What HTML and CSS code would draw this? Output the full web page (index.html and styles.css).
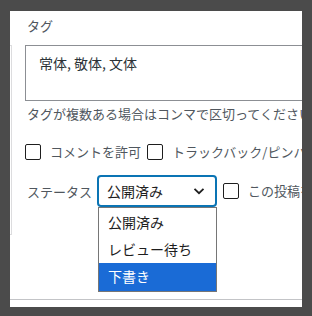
FILE: index.html
```html
<!DOCTYPE html>
<html lang="ja">
<head>
<meta charset="UTF-8">
<meta name="viewport" content="width=device-width, initial-scale=1.0">
<title>タグ</title>
<link rel="stylesheet" href="styles.css">
</head>
<body>
<div class="panel">
  <div class="behind"></div>
  <div class="label">タグ</div>
  <div class="tagbox">常体, 敬体, 文体</div>
  <div class="help">タグが複数ある場合はコンマで区切ってください</div>
  <div class="row checks">
    <span class="check"></span>
    <span class="check-label">コメントを許可</span>
    <span class="check"></span>
    <span class="check-label">トラックバック/ピンバック</span>
  </div>
  <div class="row status">
    <span class="status-label">ステータス</span>
    <div class="select-wrap">
      <div class="select">
        <span>公開済み</span>
        <svg class="chevron" width="14" height="14" viewBox="0 0 14 14">
          <path d="M2.5 4.8 L7 9.2 L11.5 4.8" fill="none" stroke="#1e1e1e" stroke-width="1.8"/>
        </svg>
      </div>
      <ul class="options">
        <li>公開済み</li>
        <li>レビュー待ち</li>
        <li class="selected">下書き</li>
      </ul>
    </div>
    <span class="check"></span>
    <span class="check-label">この投稿を先頭に固定表示</span>
  </div>
  <div class="footer-line"></div>
</div>
</body>
</html>
```

FILE: styles.css
```css
body {
    margin: 0;
    background-color: #4b4b4b;
    font-family: "Noto Sans CJK JP", "Noto Sans", sans-serif;
    font-size: 13px;
}

.panel {
    position: relative;
    margin: 11px 10px 0 10px;
    height: 296px;
    background-color: #fff;
    overflow: hidden;
    padding-top: 5px;
    box-sizing: border-box;
}

/* edge of another box peeking in from the left */
.behind {
    position: absolute;
    left: -10px;
    top: 34px;
    width: 11px;
    height: 188px;
    border: 1px solid #dcdcde;
    border-left: none;
}

.label {
    line-height: 20px;
    color: #50575e;
    padding-left: 17px;
}

.tagbox {
    margin: 9px 0 0 15px;
    width: 320px;
    height: 56px;
    box-sizing: border-box;
    border: 1px solid #8c8f94;
    padding: 7px 13px;
    font-size: 14px;
    line-height: 20px;
    color: #2c3338;
}

.help {
    margin-top: 3px;
    padding-left: 17px;
    line-height: 20px;
    color: #50575e;
    white-space: nowrap;
}

.row {
    display: flex;
    align-items: center;
    white-space: nowrap;
    padding-left: 15px;
}

.checks {
    margin-top: 18px;
    height: 20px;
}

.check {
    flex: none;
    width: 16px;
    height: 16px;
    box-sizing: border-box;
    border: 1px solid #1e1e1e;
    border-radius: 2px;
    margin-right: 9px;
}

.check-label {
    color: #50575e;
    margin-right: 6px;
    line-height: 20px;
}

.status {
    margin-top: 13px;
    height: 32px;
    padding-left: 17px;
}

.status-label {
    color: #50575e;
    margin-right: 5px;
}

.select-wrap {
    position: relative;
    margin-right: 6px;
}

.select {
    width: 120px;
    height: 32px;
    box-sizing: border-box;
    border: 2px solid #0a74b4;
    border-radius: 4px;
    display: flex;
    align-items: center;
    justify-content: space-between;
    padding: 0 9px 0 8px;
    font-size: 14px;
    color: #1e1e1e;
}

.chevron {
    display: block;
}

.options {
    position: absolute;
    left: 1px;
    top: 32px;
    width: 119px;
    margin: 0;
    padding: 1px 0 0 0;
    list-style: none;
    background-color: #fff;
    border: 1px solid #767676;
    box-sizing: border-box;
    font-size: 14px;
}

.options li {
    height: 27px;
    line-height: 27px;
    padding-left: 9px;
    color: #1e1e1e;
}

.options li.selected {
    background-color: #1a6bd6;
    color: #fff;
    height: 28px;
}

.footer-line {
    position: absolute;
    left: 0;
    right: 0;
    top: 288px;
    border-top: 1px solid #c3c4c7;
}
```
